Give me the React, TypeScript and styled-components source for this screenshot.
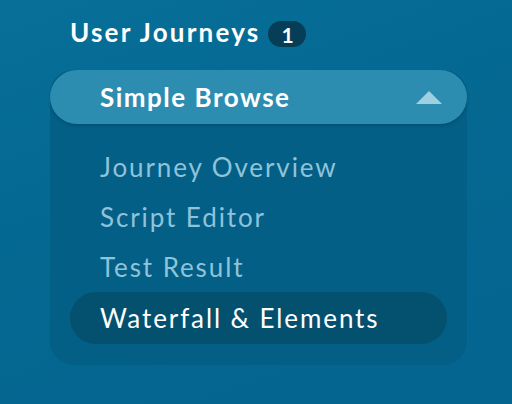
import styled, { createGlobalStyle } from "styled-components";

const GlobalStyle = createGlobalStyle`
  html, body {
    margin: 0;
    padding: 0;
    width: 512px;
    height: 404px;
    overflow: hidden;
  }
  body {
    background: linear-gradient(160deg, #076f98 0%, #046891 50%, #046590 100%);
    font-family: "Lato", "Noto Sans", sans-serif;
  }
`;

const items = ["Journey Overview", "Script Editor", "Test Result", "Waterfall & Elements"];

export default function App() {
  return (
    <>
      <GlobalStyle />
      <Container>
        <Title>
          User Journeys
          <Badge>1</Badge>
        </Title>
        <Panel>
          <PanelHeader>
            <HeaderText>Simple Browse</HeaderText>
            <svg width="26" height="13" viewBox="0 0 26 13">
              <polygon points="0,13 13,0 26,13" fill="#9fd0e2" />
            </svg>
          </PanelHeader>
          <ItemList>
            {items.map((label, i) => (
              <Item key={label} $active={i === items.length - 1}>
                {label}
              </Item>
            ))}
          </ItemList>
        </Panel>
      </Container>
    </>
  );
}

const Container = styled.div`
  display: flex;
  flex-direction: column;
  padding: 17px 45px 0 50px;
`;

const Title = styled.div`
  display: flex;
  align-items: center;
  gap: 8px;
  padding-left: 20px;
  font-size: 26px;
  font-weight: 700;
  letter-spacing: 2.2px;
  color: #ffffff;
  height: 30px;
`;

const Badge = styled.span`
  display: inline-flex;
  align-items: center;
  justify-content: center;
  width: 38px;
  height: 26px;
  margin-top: 4px;
  border-radius: 13px;
  background: #063e57;
  font-size: 21px;
  font-weight: 700;
  letter-spacing: 0;
  color: #ffffff;
`;

const Panel = styled.div`
  margin-top: 23px;
  width: 417px;
  border-radius: 24px;
  background: #035f86;
  padding-bottom: 21px;
`;

const PanelHeader = styled.div`
  display: flex;
  align-items: center;
  justify-content: space-between;
  height: 54px;
  padding: 0 25px 0 50px;
  border-radius: 27px;
  background: #2d8db0;
  box-shadow: 0 2px 3px rgba(0, 40, 70, 0.25);
`;

const HeaderText = styled.span`
  font-size: 26px;
  font-weight: 700;
  letter-spacing: 1.5px;
  color: #ffffff;
`;

const ItemList = styled.div`
  display: flex;
  flex-direction: column;
  padding: 18px 20px 0;
`;

const Item = styled.div<{ $active: boolean }>`
  display: flex;
  align-items: center;
  padding-left: 30px;
  border-radius: 26px;
  font-size: 26px;
  letter-spacing: 1.9px;
  color: ${(p) => (p.$active ? "#ffffff" : "#8fc3d9")};
  background: ${(p) => (p.$active ? "#04506f" : "transparent")};
  height: ${(p) => (p.$active ? "52px" : "50px")};
`;
